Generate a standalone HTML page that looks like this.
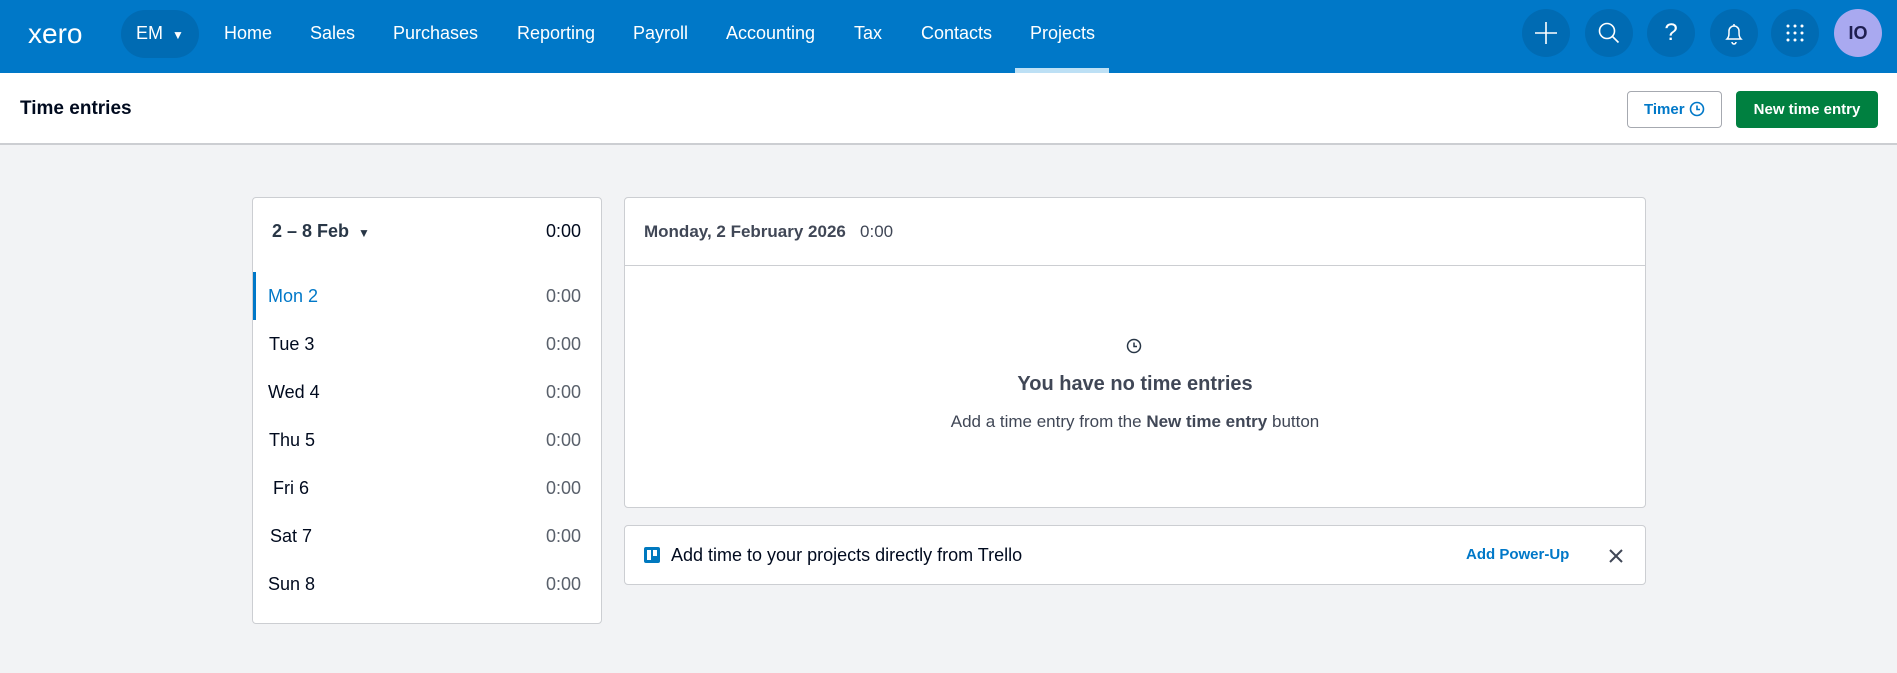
<!DOCTYPE html>
<html><head><meta charset="utf-8"><style>
*{box-sizing:border-box;margin:0;padding:0}
body{width:1897px;height:673px;background:#f2f3f5;font-family:"Liberation Sans",Arial,sans-serif;position:relative;overflow:hidden;color:#000a1e}
.a{position:absolute}
.nav{left:0;top:0;width:1897px;height:73px;background:#0078c8}
.nl{color:#fff;font-size:18px;top:23px}
.ic{width:48px;height:48px;border-radius:50%;background:#006bb3;top:9px}
.hdr{left:0;top:73px;width:1897px;height:72px;background:#fff;border-bottom:2px solid #ccced2}
.panel{background:#fff;border:1px solid #ccced2;border-radius:4px}
.row{left:0;width:100%;height:48px;font-size:18px}
.row span{position:absolute;top:14px}
</style></head><body>
<div class="a nav"></div>
<div class="a" style="left:28px;top:18px;color:#fff;font-size:28px;font-weight:normal;letter-spacing:0px">xero</div>
<div class="a" style="left:121px;top:10px;width:78px;height:48px;border-radius:24px;background:#006bb3;color:#fff;font-size:18px;padding:13px 0 0 15px">EM <span style="font-size:12px;margin-left:4px">▼</span></div>
<div class="a nl" style="left:224px">Home</div>
<div class="a nl" style="left:310px">Sales</div>
<div class="a nl" style="left:393px">Purchases</div>
<div class="a nl" style="left:517px">Reporting</div>
<div class="a nl" style="left:633px">Payroll</div>
<div class="a nl" style="left:726px">Accounting</div>
<div class="a nl" style="left:854px">Tax</div>
<div class="a nl" style="left:921px">Contacts</div>
<div class="a nl" style="left:1030px">Projects</div>
<div class="a" style="left:1015px;top:68px;width:94px;height:5px;background:#bde0f5"></div>
<div class="a ic" style="left:1522px"><svg width="48" height="48"><path d="M24 13v22M13 24h22" stroke="#fff" stroke-width="1.6"/></svg></div>
<div class="a ic" style="left:1585px"><svg width="48" height="48"><circle cx="22" cy="22" r="7.5" stroke="#fff" stroke-width="1.6" fill="none"/><path d="M27.5 27.5l6 6" stroke="#fff" stroke-width="1.6"/></svg></div>
<div class="a ic" style="left:1647px;color:#fff;font-size:24px;text-align:center;line-height:48px">?</div>
<div class="a ic" style="left:1710px"><svg width="48" height="48"><path d="M17 30c2-2 2-4 2-8a5 5 0 0 1 10 0c0 4 0 6 2 8z M22 33a2 2 0 0 0 4 0M24 15v2" stroke="#fff" stroke-width="1.5" fill="none"/></svg></div>
<div class="a ic" style="left:1771px"><svg width="48" height="48" fill="#fff"><circle cx="17" cy="17" r="1.5"/><circle cx="24" cy="17" r="1.5"/><circle cx="31" cy="17" r="1.5"/><circle cx="17" cy="24" r="1.5"/><circle cx="24" cy="24" r="1.5"/><circle cx="31" cy="24" r="1.5"/><circle cx="17" cy="31" r="1.5"/><circle cx="24" cy="31" r="1.5"/><circle cx="31" cy="31" r="1.5"/></svg></div>
<div class="a ic" style="left:1834px;background:#a9a9f0;color:#1e1e50;font-weight:bold;font-size:18px;text-align:center;line-height:48px">IO</div>
<div class="a hdr"></div>
<div class="a" style="left:20px;top:98px;font-size:19px;font-weight:bold">Time entries</div>
<div class="a" style="left:1627px;top:91px;width:95px;height:37px;border:1px solid #a6a9b0;border-radius:4px;background:#fff;color:#0078c8;font-weight:bold;font-size:15px;padding:9px 0 0 16px">Timer <svg width="16" height="16" style="vertical-align:-3px"><circle cx="8" cy="8" r="6.5" stroke="#0078c8" stroke-width="1.6" fill="none"/><path d="M8 4.5V8.5h3" stroke="#0078c8" stroke-width="1.6" fill="none"/></svg></div>
<div class="a" style="left:1736px;top:91px;width:142px;height:37px;border-radius:4px;background:#008040;color:#fff;font-weight:bold;font-size:15px;text-align:center;line-height:37px">New time entry</div>

<div class="a panel" style="left:252px;top:197px;width:350px;height:427px">
<div class="a" style="left:19px;top:23px;font-size:18px;font-weight:bold;color:#283646">2 – 8 Feb <span style="font-size:12px;margin-left:4px">▼</span></div>
<div class="a" style="right:20px;top:23px;font-size:18px">0:00</div>
<div class="a row" style="top:74px"><div class="a" style="left:0;top:0;width:3px;height:48px;background:#0078c8"></div><span style="left:15px;color:#0078c8">Mon 2</span><span style="right:20px;color:#59606b">0:00</span></div>
<div class="a row" style="top:122px"><span style="left:16px">Tue 3</span><span style="right:20px;color:#59606b">0:00</span></div>
<div class="a row" style="top:170px"><span style="left:15px">Wed 4</span><span style="right:20px;color:#59606b">0:00</span></div>
<div class="a row" style="top:218px"><span style="left:16px">Thu 5</span><span style="right:20px;color:#59606b">0:00</span></div>
<div class="a row" style="top:266px"><span style="left:20px">Fri 6</span><span style="right:20px;color:#59606b">0:00</span></div>
<div class="a row" style="top:314px"><span style="left:17px">Sat 7</span><span style="right:20px;color:#59606b">0:00</span></div>
<div class="a row" style="top:362px"><span style="left:15px">Sun 8</span><span style="right:20px;color:#59606b">0:00</span></div>
</div>

<div class="a panel" style="left:624px;top:197px;width:1022px;height:311px">
<div class="a" style="left:19px;top:24px;font-size:17px;color:#404756"><b>Monday, 2 February 2026</b>&nbsp;&nbsp; 0:00</div>
<div class="a" style="left:0;top:67px;width:100%;height:1px;background:#ccced2"></div>
<div class="a" style="left:501px;top:140px"><svg width="16" height="16"><circle cx="8" cy="8" r="6.5" stroke="#283646" stroke-width="1.5" fill="none"/><path d="M8 4.5V8.5h3" stroke="#283646" stroke-width="1.5" fill="none"/></svg></div>
<div class="a" style="left:0;width:100%;top:175px;text-align:center;font-size:20px;font-weight:bold;color:#404756">You have no time entries</div>
<div class="a" style="left:0;width:100%;top:214px;text-align:center;font-size:17px;color:#404756">Add a time entry from the <b>New time entry</b> button</div>
</div>

<div class="a panel" style="left:624px;top:525px;width:1022px;height:60px">
<div class="a" style="left:19px;top:21px;width:16px;height:16px;background:#0079bf;border-radius:2px"><div class="a" style="left:3px;top:3px;width:4px;height:10px;background:#fff"></div><div class="a" style="left:9px;top:3px;width:4px;height:6px;background:#fff"></div></div>
<div class="a" style="left:46px;top:19px;font-size:18px;color:#000a1e">Add time to your projects directly from Trello</div>
<div class="a" style="left:841px;top:20px;font-size:15px;font-weight:bold;color:#0078c8">Add Power-Up</div>
<div class="a" style="left:983px;top:22px"><svg width="16" height="16"><path d="M2 2l12 12M14 2L2 14" stroke="#404756" stroke-width="2"/></svg></div>
</div>
</body></html>
